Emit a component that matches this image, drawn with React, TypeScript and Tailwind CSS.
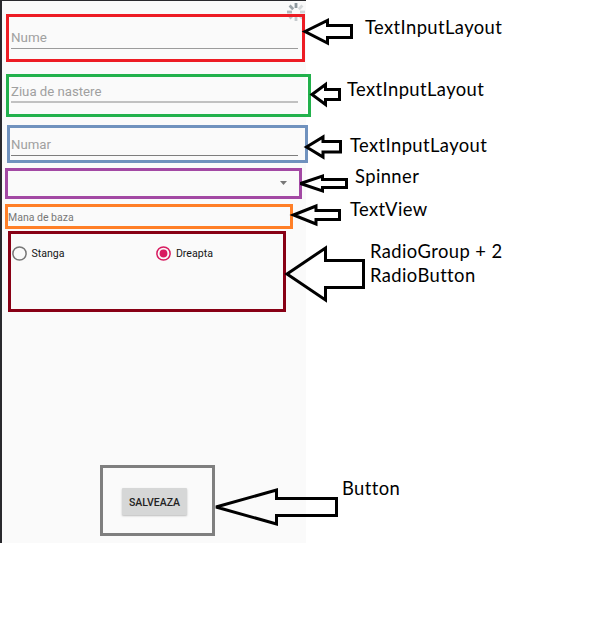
import React from "react";

function Field({ label, box, line }: { label: string; box: string; line: string }) {
  return (
    <div className={`shrink-0 border-[3px] ${box}`}>
      <div className={`w-[287px] whitespace-nowrap text-[#a0a0a0] ${line}`}>{label}</div>
    </div>
  );
}

function Radio({ label, checked }: { label: string; checked?: boolean }) {
  return (
    <div className="flex h-4 w-[144.4px] shrink-0 items-center gap-[4.5px] text-[10.6px] text-[#151515]">
      <svg width="15" height="15" viewBox="0 0 15 15">
        <circle cx="7.5" cy="7.5" r="6.6" fill="none" stroke={checked ? "#d81b60" : "#777777"} strokeWidth="1.5" />
        {checked && <circle cx="7.5" cy="7.5" r="3.9" fill="#d81b60" />}
      </svg>
      <span className="pt-[2px]">{label}</span>
    </div>
  );
}

const arrows = [
  "M305 31.5 L327.5 20.5 V25.5 H351.5 V37.5 H327.5 V43 Z",
  "M312 94.5 L325.5 84.5 V89.5 H339.5 V99.5 H325.5 V104.5 Z",
  "M306.5 147 L323 137 V141.5 H340.5 V152 H323 V157 Z",
  "M300.5 183.5 L322.5 176 V179.5 H346.5 V187.5 H322.5 V191 Z",
  "M293.5 215 L316 206 V210.5 H339.5 V219.5 H316 V224 Z",
  "M287 274 L325.5 248 V260.5 H363.5 V287.5 H325.5 V300 Z",
  "M216 507 L276.5 490 V498.5 H336.5 V515.5 H276.5 V524 Z",
];

const labels = [
  { text: "TextInputLayout", cls: "ml-[59px] mt-[15px]" },
  { text: "TextInputLayout", cls: "ml-[41px] mt-[38px]" },
  { text: "TextInputLayout", cls: "ml-[44px] mt-[32px]" },
  { text: "Spinner", cls: "ml-[49px] mt-[7px]" },
  { text: "TextView", cls: "ml-[44px] mt-[9px]" },
  { text: "RadioGroup + 2\nRadioButton", cls: "ml-[64px] mt-[18px]" },
  { text: "Button", cls: "ml-[36px] mt-[189px]" },
];

export default function App() {
  return (
    <main className="relative flex h-[631px] w-[589px] overflow-hidden bg-white">
      <section className="flex h-[543px] w-[306px] shrink-0 flex-col items-start border-l-2 border-t border-[#29292d] bg-[#fafafa] font-['Roboto',sans-serif]">
        <svg className="absolute left-[286px] top-[2px]" width="20" height="20" viewBox="0 0 20 20" strokeWidth="2.8">
          <path d="M10 1V6" stroke="#8d979d" />
          <path d="M16.4 3.6L12.8 7.2" stroke="#d5d8da" />
          <path d="M19 10H14" stroke="#d0d4d7" />
          <path d="M16.4 16.4L12.8 12.8" stroke="#d0d4d7" />
          <path d="M10 19V14" stroke="#c5cacd" />
          <path d="M3.6 16.4L7.2 12.8" stroke="#bdc3c7" />
          <path d="M1 10H6" stroke="#b0b7bb" />
          <path d="M3.6 3.6L7.2 7.2" stroke="#9ba4a9" />
        </svg>

        <Field label="Nume" box="relative ml-1 mt-[13px] h-12 w-[299px] border-[#ed1c24] pl-0.5 pt-[13px]" line="h-[19px] border-b border-[#9b9b9b] text-[13.4px] leading-4" />
        <Field label="Ziua de nastere" box="relative ml-1 mt-3 h-[43px] w-[305px] border-[#22b14c] pl-0.5 pt-[7px]" line="h-[19px] border-b-2 border-[#c1c1c1] text-[13.2px] leading-4" />
        <Field label="Numar" box="ml-[5px] mt-2 h-[38px] w-[301px] border-[#7092be] pt-[9px] pl-px" line="h-[19px] border-b border-[#7d7d7d] text-[13.2px] leading-4" />

        <div className="mt-[5px] ml-[3px] flex h-[31px] w-[297px] shrink-0 justify-end border-[3px] border-[#a349a4] pr-[12px] pt-[10px]">
          <svg width="7" height="4" viewBox="0 0 7 4"><path d="M0 0H7L3.5 4Z" fill="#777777" /></svg>
        </div>
        <div className="mt-[5px] ml-[3px] h-[25px] w-[288px] shrink-0 border-[3px] border-[#ff7f27] pt-1 text-[10.5px] leading-[13px] text-[#777777]">
          Mana de baza
        </div>
        <div className="ml-[6px] mt-[2px] flex h-[81px] w-[278px] shrink-0 border-[3px] border-[#880015] pl-px pt-[11px]">
          <Radio label="Stanga" />
          <Radio label="Dreapta" checked />
        </div>
        <div className="ml-[98px] mt-[153px] flex h-[71px] w-[115px] shrink-0 items-start border-[3px] border-[#7f7f7f] pl-[19px] pt-[20px]">
          <button className="h-[27px] w-[65px] rounded-[1px] bg-[#d6d7d7] pt-[2px] text-[10.5px] font-medium leading-[25px] text-[#222222] shadow-[0_1px_2px_rgba(0,0,0,0.25)]">
            SALVEAZA
          </button>
        </div>
      </section>

      <aside className="flex flex-col items-start font-['Lato','Open_Sans',sans-serif] text-[18.4px] leading-6 tracking-[0.4px] text-black">
        {labels.map((l, i) => (
          <span key={i} className={`whitespace-pre ${l.cls}`}>{l.text}</span>
        ))}
      </aside>

      <svg className="pointer-events-none absolute left-0 top-0" width="589" height="631" viewBox="0 0 589 631" fill="none" stroke="#000000" strokeWidth="3">
        {arrows.map((d) => <path key={d} d={d} strokeLinejoin="miter" strokeMiterlimit="3" />)}
      </svg>
    </main>
  );
}
